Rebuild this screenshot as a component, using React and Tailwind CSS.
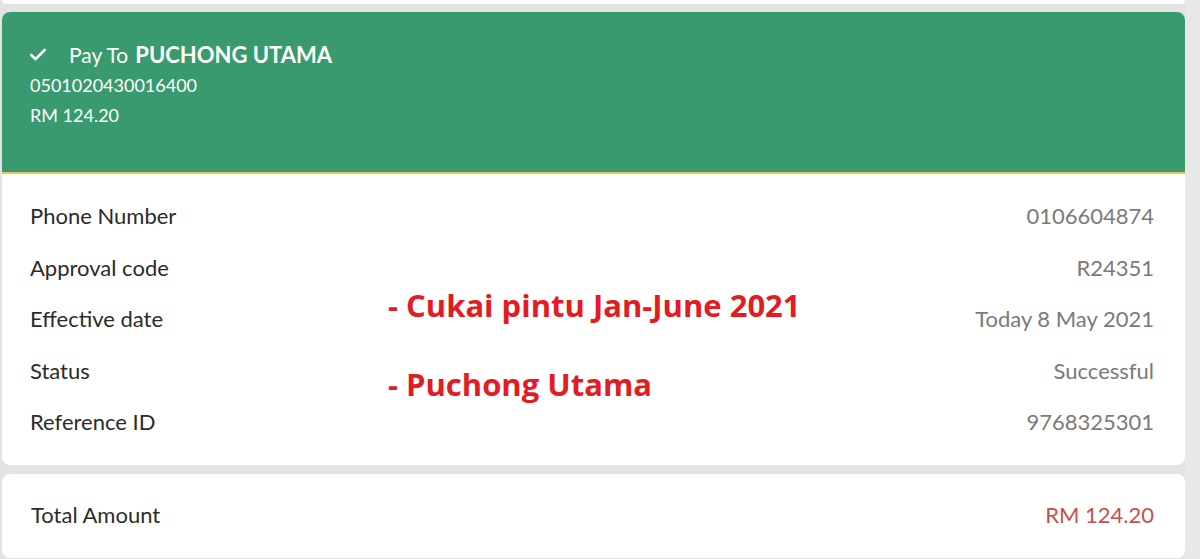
import { Check } from 'lucide-react';

const details = [
  { label: 'Phone Number', value: '0106604874' },
  { label: 'Approval code', value: 'R24351' },
  { label: 'Effective date', value: 'Today 8 May 2021' },
  { label: 'Status', value: 'Successful' },
  { label: 'Reference ID', value: '9768325301' },
];

const App = () => {
  return (
    <div
      className="flex h-[559px] w-[1200px] overflow-hidden bg-[#e3e3e3]"
      style={{ fontFamily: 'Lato, "Open Sans", sans-serif' }}
    >
      <div className="flex w-[1185px] flex-col pl-[2px]">
        {/* previous card edge */}
        <div className="h-[4px] rounded-b-lg bg-white" />

        {/* Receipt card */}
        <div className="relative mt-[8px] overflow-hidden rounded-lg bg-white">
          <div className="h-[160px] bg-[#3a9a6f] px-[28px] pt-[26px] text-white">
            <div className="flex items-center">
              <Check size={20} strokeWidth={3.2} className="mr-[21px] -ml-[2px]" />
              <span className="text-[21px]">Pay To</span>
              <span className="ml-[7px] text-[22px] font-bold">PUCHONG UTAMA</span>
            </div>
            <div className="mt-[2px] text-[18px] leading-[24px]">0501020430016400</div>
            <div className="mt-[6px] text-[18px] leading-[24px]">RM 124.20</div>
          </div>
          <div className="h-[2px] bg-[#e7c655]" />
          <div className="flex flex-col px-[28px] pt-[16px] pb-[17px]">
            {details.map((row) => (
              <div key={row.label} className="flex h-[51.5px] items-center justify-between text-[22px]">
                <span className="text-[#2b2b2b]">{row.label}</span>
                <span className="pr-[3px] text-[#7a7a7a]">{row.value}</span>
              </div>
            ))}
          </div>

          {/* annotation */}
          <div
            className="absolute top-[271px] left-[386px] text-[31px] font-bold text-[#e31b23]"
            style={{ fontFamily: '"Open Sans", "Noto Sans", sans-serif' }}
          >
            <div className="leading-[44px]">- Cukai pintu Jan-June 2021</div>
            <div className="mt-[35px] leading-[44px]">- Puchong Utama</div>
          </div>
        </div>

        {/* Total */}
        <div className="mt-[9px] flex h-[84px] items-center justify-between rounded-lg bg-white px-[29px] pb-[3px] text-[22px]">
          <span className="text-[#2b2b2b]">Total Amount</span>
          <span className="pr-[2px] text-[#c5504f]">RM 124.20</span>
        </div>
      </div>
      <div className="w-[15px] bg-[#e8e8e8]" />
    </div>
  );
};

export default App;
